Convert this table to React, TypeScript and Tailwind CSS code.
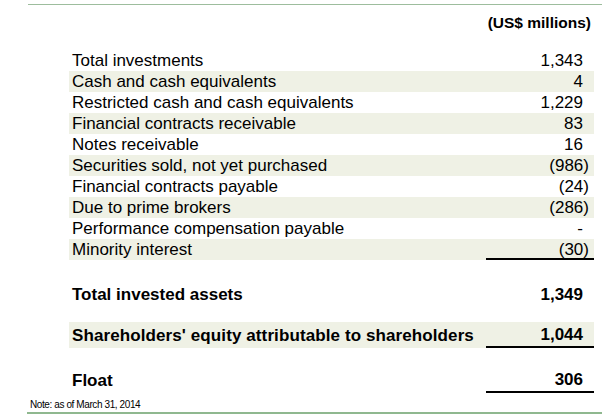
const rows: { label: string; value: string; neg?: boolean }[] = [
  { label: 'Total investments', value: '1,343' },
  { label: 'Cash and cash equivalents', value: '4' },
  { label: 'Restricted cash and cash equivalents', value: '1,229' },
  { label: 'Financial contracts receivable', value: '83' },
  { label: 'Notes receivable', value: '16' },
  { label: 'Securities sold, not yet purchased', value: '(986', neg: true },
  { label: 'Financial contracts payable', value: '(24', neg: true },
  { label: 'Due to prime brokers', value: '(286', neg: true },
  { label: 'Performance compensation payable', value: '-' },
  { label: 'Minority interest', value: '(30', neg: true },
];

const Value = ({ value, neg }: { value: string; neg?: boolean }) => (
  <span>
    {value}
    {neg && <span className="-mr-[6px]">)</span>}
  </span>
);

const App = () => {
  return (
    <div
      className="w-[602px] h-[414px] bg-white text-black overflow-hidden flex flex-col"
      style={{ fontFamily: '"Liberation Sans", Arial, sans-serif' }}
    >
      <div className="mt-[4px] ml-[28px] border-t border-[#9dbd9d]" />

      <div className="flex justify-end pr-[11px] mt-[9px] h-[18px] items-center text-[15.5px] font-bold">
        (US$ millions)
      </div>

      <div className="mt-[18px] ml-[69px] w-[525px] text-[17px] leading-[21px]">
        {rows.map((r, i) => (
          <div
            key={r.label}
            className={`flex h-[21px] ${i % 2 === 1 ? 'bg-[#eff1e5]' : ''}`}
          >
            <div className="flex-1 pl-[3px]">{r.label}</div>
            <div
              className={`w-[108px] text-right pr-[11px] ${
                i === rows.length - 1 ? 'border-b-2 border-black' : ''
              }`}
            >
              <Value value={r.value} neg={r.neg} />
            </div>
          </div>
        ))}

        <div className="flex h-[24px] mt-[22px] items-center font-bold">
          <div className="flex-1 pl-[3px]">Total invested assets</div>
          <div className="w-[108px] text-right pr-[11px]">1,349</div>
        </div>

        <div className="flex h-[26px] mt-[16px] items-center font-bold bg-[#eff1e5]">
          <div className="flex-1 pl-[3px] whitespace-nowrap tracking-[0.1px]">
            Shareholders' equity attributable to shareholders
          </div>
          <div className="w-[108px] h-full flex items-center justify-end pr-[11px] border-b-2 border-black">
            1,044
          </div>
        </div>

        <div className="flex h-[26px] mt-[19px] items-center font-bold">
          <div className="flex-1 pl-[3px]">Float</div>
          <div className="w-[108px] h-full flex items-center justify-end pr-[11px] border-b-2 border-black">
            306
          </div>
        </div>
      </div>

      <div className="ml-[30px] mt-[7px] text-[10px] leading-[10px] tracking-[-0.4px]">
        Note: as of March 31, 2014
      </div>

      <div className="mt-[2px] ml-[27px] border-t-2 border-[#8fb88f]" />
    </div>
  );
};

export default App;
